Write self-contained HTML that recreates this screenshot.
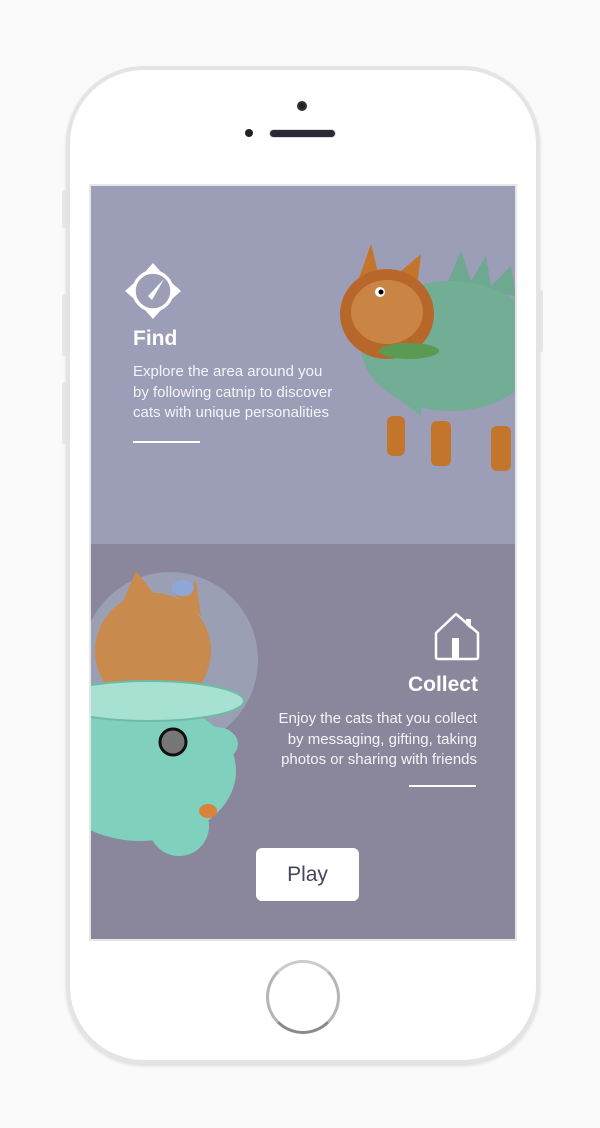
<!DOCTYPE html>
<html><head><meta charset="utf-8"><style>
*{margin:0;padding:0;box-sizing:border-box}
body{width:600px;height:1128px;background:#fafafa;position:relative;overflow:hidden;font-family:"Liberation Sans",sans-serif}
.phone{position:absolute;left:66px;top:66px;width:474px;height:998px;border-radius:78px;background:#fff;border:4px solid #e4e4e4;box-shadow:0 2px 3px #ddd}
.btn{position:absolute;background:#e8e8e8;border-radius:2px}
.screen{position:absolute;left:89px;top:184px;width:428px;height:757px;border:2px solid #e6e6e6;overflow:hidden}
.top{position:absolute;left:0;top:0;width:100%;height:358px;background:#9c9db7}
.bot{position:absolute;left:0;top:358px;width:100%;height:400px;background:#8a879c}
h2{position:absolute;color:#fff;font-size:21px;font-weight:bold}
.p{position:absolute;color:#f4f4f8;font-size:15px;line-height:20.5px}
.line{position:absolute;height:1.5px;background:#fff}
</style></head><body>
<div class="btn" style="left:62px;top:190px;width:5px;height:38px"></div>
<div class="btn" style="left:62px;top:294px;width:5px;height:62px"></div>
<div class="btn" style="left:62px;top:382px;width:5px;height:62px"></div>
<div class="btn" style="left:538px;top:290px;width:5px;height:62px"></div>
<div class="phone"></div>
<div style="position:absolute;left:297px;top:101px;width:10px;height:10px;border-radius:50%;background:#222;border:2px solid #333"></div>
<div style="position:absolute;left:245px;top:129px;width:8px;height:8px;border-radius:50%;background:#222"></div>
<div style="position:absolute;left:269px;top:129px;width:67px;height:9px;border-radius:5px;background:#2a2a35;border:1px solid #ddd"></div>
<div class="screen">
<div class="top"></div><div class="bot"></div>
<svg style="position:absolute;left:0;top:0" width="428" height="757">
<!-- top cat -->
<path d="M355 100 L370 65 L380 95 L395 70 L400 100 L420 80 L425 110 Z" fill="#6fa890"/>
<ellipse cx="360" cy="160" rx="90" ry="65" fill="#72ad96"/>
<path d="M290 200 Q300 150 330 150 L330 230 Z" fill="#72ad96"/>
<rect x="296" y="230" width="18" height="40" rx="6" fill="#c4752c"/>
<rect x="340" y="235" width="20" height="45" rx="6" fill="#c4752c"/>
<rect x="400" y="240" width="20" height="45" rx="6" fill="#c4752c"/>
<path d="M268 92 L280 58 L288 90 Z M310 85 L330 68 L326 100 Z" fill="#c4752c"/>
<ellipse cx="296" cy="128" rx="47" ry="45" fill="#b8672a"/>
<ellipse cx="296" cy="126" rx="36" ry="32" fill="#d59a5a" opacity=".6"/>
<ellipse cx="318" cy="165" rx="30" ry="8" fill="#5b9a52"/>
<circle cx="289" cy="106" r="5" fill="#fff"/><circle cx="290" cy="106" r="2.5" fill="#000"/>
<!-- bottom cat -->
<circle cx="79" cy="474" r="88" fill="#a9b3c8" opacity=".55"/>
<path d="M30 420 L45 385 L65 410 Z M85 410 L105 395 L110 430 Z" fill="#c98a4e"/>
<ellipse cx="62" cy="465" rx="58" ry="58" fill="#c98a4e"/>
<ellipse cx="50" cy="585" rx="95" ry="70" fill="#7fd1bd"/>
<ellipse cx="125" cy="558" rx="22" ry="17" fill="#7fd1bd"/>
<ellipse cx="88" cy="640" rx="30" ry="30" fill="#7fd1bd"/>
<ellipse cx="58" cy="515" rx="95" ry="20" fill="#a6e1d1" stroke="#6fbaa8" stroke-width="2"/>
<circle cx="82" cy="556" r="13" fill="#777" stroke="#111" stroke-width="3"/>
<ellipse cx="117" cy="625" rx="9" ry="7" fill="#d9823a"/>
<ellipse cx="92" cy="402" rx="11" ry="8" fill="#8fa6d8"/>
</svg>
<svg style="position:absolute;left:33px;top:76px" width="58" height="58" viewBox="0 0 58 58">
<circle cx="29" cy="29" r="19" fill="none" stroke="#fff" stroke-width="3.5"/>
<path d="M29 1 L37 10 L21 10Z M29 57 L37 48 L21 48Z M1 29 L10 21 L10 37Z M57 29 L48 21 L48 37Z" fill="#fff"/>
<path d="M40 17 L24 34 L28 38 Z" fill="#fff"/>
</svg>
<h2 style="left:42px;top:141px">Find</h2>
<div class="p" style="left:42px;top:176px">Explore the area around you<br>by following catnip to discover<br>cats with unique personalities</div>
<div class="line" style="left:42px;top:255px;width:67px"></div>
<svg style="position:absolute;left:342px;top:425px" width="48" height="52" viewBox="0 0 48 52">
<path d="M3 22 L23 3 L45 22 V46 Q45 48 43 48 H5 Q3 48 3 46 Z" fill="none" stroke="#fff" stroke-width="2.5" stroke-linejoin="round"/>
<path d="M33 8 V14 L38 18 V8Z" fill="#fff"/>
<rect x="19" y="27" width="7" height="21" fill="#fff"/>
</svg>
<h2 style="right:37px;top:487px">Collect</h2>
<div class="p" style="right:38px;top:523px;text-align:right">Enjoy the cats that you collect<br>by messaging, gifting, taking<br>photos or sharing with friends</div>
<div class="line" style="left:318px;top:599px;width:67px"></div>
<div style="position:absolute;left:165px;top:662px;width:103px;height:53px;background:#fff;border-radius:6px;text-align:center;line-height:53px;font-size:21px;color:#45455a">Play</div>
</div>
<div style="position:absolute;left:266px;top:960px;width:74px;height:74px;border-radius:50%;border:3px solid #b5b5b5;border-bottom-color:#8a8a8a;border-top-color:#ccc"></div>
</body></html>
